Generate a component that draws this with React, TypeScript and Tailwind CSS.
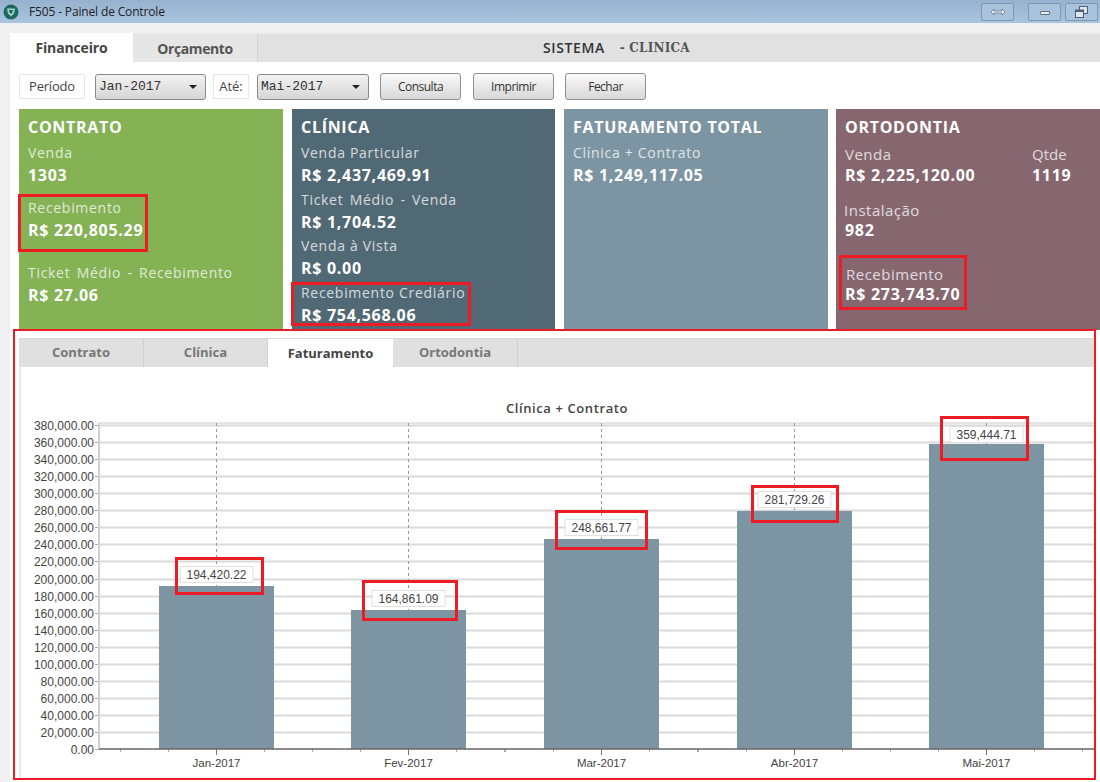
import React from "react";

function Metric({ label, value, className = "", ticket = false }: { label: string; value: string; className?: string; ticket?: boolean }) {
  return (
    <div className={className}>
      <div className={`text-[14px] leading-[20px] tracking-[0.7px] opacity-75 ${ticket ? "[word-spacing:2px]" : ""}`}>{label}</div>
      <div className="mt-px text-[16px] leading-[22px] tracking-[0.7px] font-bold">{value}</div>
    </div>
  );
}

function Btn({ children, w }: { children: React.ReactNode; w: string }) {
  return (
    <div className={`${w} h-[27px] flex items-center justify-center rounded-[3px] border border-[#8f8f8f] bg-gradient-to-b from-[#fafafa] to-[#d8d8d8] text-[12px] tracking-[-0.5px] text-[#333]`}>
      {children}
    </div>
  );
}

function Select({ value, w }: { value: string; w: string }) {
  return (
    <div className={`${w} h-[26px] flex items-center justify-between pl-[3px] pr-[8px] rounded-[3px] border border-[#8a8a8a] bg-gradient-to-b from-[#f2f2f2] to-[#d6d6d6] font-['Liberation_Mono',monospace] text-[13px] text-[#333]`}>
      <span>{value}</span>
      <span className="w-0 h-0 border-x-[4px] border-x-transparent border-t-[4px] border-t-[#222]" />
    </div>
  );
}

const Red = ({ c }: { c: string }) => <div className={`absolute border-[3px] border-[#ed1c24] ${c}`} />;

const Title = ({ children }: { children: React.ReactNode }) => (
  <div className="text-[16px] leading-[22px] tracking-[0.7px] font-bold">{children}</div>
);

const X0 = 99, X1 = 1095, Y0 = 749, STEP = 17.05;
const ticks = Array.from({ length: 20 }, (_, i) => i * 20000);
const fmt = (n: number) => n.toLocaleString("en-US", { minimumFractionDigits: 2, maximumFractionDigits: 2 });
const bars = [
  { x: 159, top: 586, label: "Jan-2017", val: "194,420.22", ly: 566 },
  { x: 351, top: 610, label: "Fev-2017", val: "164,861.09", ly: 590 },
  { x: 544, top: 539, label: "Mar-2017", val: "248,661.77", ly: 519 },
  { x: 737, top: 511, label: "Abr-2017", val: "281,729.26", ly: 491 },
  { x: 929, top: 444, label: "Mai-2017", val: "359,444.71", ly: 426 },
];

function Chart() {
  return (
    <svg width="1076" height="411" viewBox="19 367 1076 411" className="block bg-white font-['Liberation_Sans',sans-serif]">
      <line x1="20" x2="20" y1="367" y2="778" stroke="#e2e2e2" strokeWidth="1.5" />
      <text x="567" y="413" textAnchor="middle" fontSize="13" letterSpacing="0.6" fontWeight="600" fill="#444" fontFamily="'Open Sans',sans-serif">Clínica + Contrato</text>
      <line x1={X0} x2={X1} y1={423} y2={423} stroke="#dcdcdc" strokeWidth="1.5" />
      {ticks.map((t, i) => {
        const y = Math.round(Y0 - i * STEP) + 0.5;
        return (
          <g key={t}>
            {i > 0 && <line x1={X0} x2={X1} y1={y} y2={y} stroke="#dadada" strokeWidth="2" />}
            <line x1={95} x2={X0} y1={y} y2={y} stroke="#aaa" />
            <text x="94" y={y + 4} textAnchor="end" fontSize="12" fill="#444">{fmt(t)}</text>
          </g>
        );
      })}
      <line x1={X0} x2={X0} y1={423} y2={749} stroke="#d0d0d0" strokeWidth="2" />
      {bars.map((b) => {
        const cx = b.x + 57.5;
        return (
          <g key={b.label}>
            <line x1={cx} x2={cx} y1={423} y2={b.top} stroke="#999" strokeDasharray="3 3" />
            <rect x={b.x} y={b.top} width="115" height={749 - b.top} fill="#7d95a2" />
            <rect x={cx - 36.5} y={b.ly + 0.5} width="73" height="16" fill="#fff" stroke="#e0e0e0" />
            <text x={cx} y={b.ly + 12.5} textAnchor="middle" fontSize="12" fill="#444">{b.val}</text>
            <line x1={cx} x2={cx} y1={749} y2={755} stroke="#777" />
            {[-96, -48, 48, 96].map((d) => (
              <line key={d} x1={cx + d} x2={cx + d} y1={749} y2={752} stroke="#aaa" />
            ))}
            <text x={cx} y={767} textAnchor="middle" fontSize="11.5" fill="#444">{b.label}</text>
          </g>
        );
      })}
      <line x1={X0} x2={X1} y1={749} y2={749} stroke="#666" strokeWidth="1.5" />
    </svg>
  );
}

export default function App() {
  return (
    <div className="relative w-[1100px] h-[782px] overflow-hidden bg-[#f0f0f0] font-['Open_Sans',sans-serif] text-[#333]">
      {/* title bar */}
      <div className="h-[23px] flex items-center bg-gradient-to-b from-[#97b2d0] to-[#a9c4de]">
        <svg width="18" height="18" viewBox="0 0 18 18" className="ml-[2px]">
          <circle cx="9" cy="9" r="7.5" fill="#1c6a5f" />
          <path d="M5 5.5h8l-1 5-3 3-3-3z" fill="#a9d0c4" />
          <path d="M7 7h4l-.6 2.6L9 11 7.6 9.6z" fill="#1c6a5f" />
        </svg>
        <span className="ml-[9px] text-[12px] tracking-[-0.15px] text-[#222]">F505 - Painel de Controle</span>
        <div className="ml-auto flex items-center mr-[2px]">
          <div className="w-[33px] h-[18px] flex items-center justify-center rounded-[2px] border border-[#7d98b5] bg-[#aac3dc] mr-[14px]">
            <svg width="16" height="8" viewBox="0 0 16 8"><path d="M1 4l3-3v2h8V1l3 3-3 3V5H4v2z" fill="#e8f0f6" stroke="#5d7084" strokeWidth="0.7" /></svg>
          </div>
          <div className="w-[33px] h-[18px] flex items-center justify-center rounded-[2px] border border-[#7d98b5] bg-[#aac3dc] mr-[4px]">
            <div className="w-[10px] h-[4px] mt-[3px] bg-[#e8eef4] border border-[#5d7084] rounded-[1px]" />
          </div>
          <div className="w-[33px] h-[18px] flex items-center justify-center rounded-[2px] border border-[#7d98b5] bg-[#aac3dc]">
            <svg width="13" height="12" viewBox="0 0 13 12"><rect x="4.5" y="0.5" width="8" height="7" fill="#dfe8f0" stroke="#4d5f70" /><rect x="0.5" y="4" width="8" height="7.5" fill="#dfe8f0" stroke="#4d5f70" /><rect x="0.5" y="4" width="8" height="2" fill="#4d5f70" /></svg>
          </div>
        </div>
      </div>

      {/* outer page */}
      <div className="ml-[10px] mt-[10px] h-[749px] bg-white">
        {/* top tabs */}
        <div className="h-[29px] flex bg-[#e1e1e1] border-t border-[#ececec]">
          <div className="w-[123px] h-[29px] -mt-px bg-white flex items-center justify-center text-[14px] tracking-[-0.15px] font-bold text-[#444]">Financeiro</div>
          <div className="w-[125px] flex items-center justify-center text-[14px] tracking-[-0.4px] font-bold text-[#555] bg-[#e6e6e6] border-r border-[#d4d4d4]">Orçamento</div>
          <div className="ml-[285px] flex items-center h-[27px]">
            <span className="text-[14px] font-semibold tracking-[0.6px] text-[#333]">SISTEMA</span>
            <span className="ml-[15px] text-[12px] font-bold font-['DejaVu_Serif',serif] tracking-[0.2px] text-[#555]">- CLINICA</span>
          </div>
        </div>

        {/* toolbar */}
        <div className="h-[47px] pl-[9px] pt-[11px]">
          <div className="h-[27px] flex items-center">
            <div className="w-[66px] h-[25px] flex items-center justify-center border border-[#e6e6e6] text-[13px] tracking-[-0.2px] text-[#444]">Período</div>
            <Select value="Jan-2017" w="w-[111px] ml-[10px]" />
            <div className="ml-[7px] w-[36px] h-[25px] flex items-center justify-center border border-[#e6e6e6] text-[13px] text-[#444]">Até:</div>
            <Select value="Mai-2017" w="w-[112px] ml-[8px]" />
            <Btn w="w-[81px] ml-[11px]">Consulta</Btn>
            <Btn w="w-[81px] ml-[12px]">Imprimir</Btn>
            <Btn w="w-[81px] ml-[11px]">Fechar</Btn>
          </div>
        </div>

        {/* cards */}
        <div className="flex h-[221px] pl-[9px] text-white">
          <div className="relative w-[264px] bg-[#84b255] pl-[9px] pt-[7px]">
            <Title>CONTRATO</Title>
            <Metric label="Venda" value="1303" className="mt-[5px]" />
            <Metric label="Recebimento" value="R$ 220,805.29" className="mt-[12px]" />
            <Metric label="Ticket Médio - Recebimento" ticket value="R$ 27.06" className="mt-[22px]" />
            <Red c="left-[-1px] top-[85px] w-[130px] h-[58px]" />
          </div>
          <div className="relative w-[263px] ml-[9px] bg-[#516975] pl-[9px] pt-[7px]">
            <Title>CLÍNICA</Title>
            <Metric label="Venda Particular" value="R$ 2,437,469.91" className="mt-[5px]" />
            <Metric label="Ticket Médio - Venda" ticket value="R$ 1,704.52" className="mt-[3.5px]" />
            <Metric label="Venda à Vista" value="R$ 0.00" className="mt-[3.5px]" />
            <Metric label="Recebimento Crediário" value="R$ 754,568.06" className="mt-[3.5px]" />
            <Red c="left-[-1px] top-[173px] w-[180px] h-[44px]" />
          </div>
          <div className="w-[264px] ml-[9px] bg-[#7d95a2] pl-[9px] pt-[7px]">
            <Title>FATURAMENTO TOTAL</Title>
            <Metric label="Clínica + Contrato" value="R$ 1,249,117.05" className="mt-[5px]" />
          </div>
          <div className="relative w-[264px] ml-[8px] bg-[#866770] pl-[9px] pt-[7px]">
            <Title>ORTODONTIA</Title>
            <div className="flex mt-[6px]">
              <div className="w-[187px]">
                <div className="text-[15px] leading-[20px] tracking-[0.5px] opacity-75">Venda</div>
                <div className="mt-px text-[16px] leading-[21px] tracking-[0.7px] font-bold">R$ 2,225,120.00</div>
              </div>
              <div>
                <div className="text-[15px] leading-[20px] opacity-75">Qtde</div>
                <div className="mt-px text-[16px] leading-[21px] tracking-[0.7px] font-bold">1119</div>
              </div>
            </div>
            <div className="mt-[14px] -ml-px text-[15px] leading-[20px] tracking-[0.5px] opacity-75">Instalação</div>
            <div className="text-[16px] leading-[21px] tracking-[0.7px] font-bold">982</div>
            <div className="mt-[23px] ml-px text-[15px] leading-[20px] tracking-[0.5px] opacity-75">Recebimento</div>
            <div className="text-[16px] leading-[21px] tracking-[0.7px] font-bold">R$ 273,743.70</div>
            <Red c="left-[3px] top-[146px] w-[128px] h-[55px]" />
          </div>
        </div>

        {/* chart panel */}
        <div className="pl-[9px] pt-[8px] pr-[5px]">
          <div className="flex h-[29px] bg-[#e0e0e0] border-t border-[#d6d6d6] text-[13px] font-bold">
            <div className="w-[125px] flex items-center justify-center text-[#777] border-r border-[#cfcfcf]">Contrato</div>
            <div className="w-[124px] flex items-center justify-center text-[#777] border-r border-[#cfcfcf]">Clínica</div>
            <div className="w-[125px] h-[29px] bg-white flex items-center justify-center text-[#444]">Faturamento</div>
            <div className="w-[125px] flex items-center justify-center text-[#777] border-r border-[#cfcfcf]">Ortodontia</div>
          </div>
          <Chart />
        </div>
      </div>

      {/* annotation frames over the chart */}
      <div className="absolute left-[13px] top-[329px] w-[1083px] h-[451px] border-[2px] border-[#ed1c24]" />
      <Red c="left-[175px] top-[557px] w-[89px] h-[38px]" />
      <Red c="left-[362px] top-[580px] w-[96px] h-[41px]" />
      <Red c="left-[555px] top-[510px] w-[93px] h-[40px]" />
      <Red c="left-[751px] top-[485px] w-[88px] h-[38px]" />
      <Red c="left-[940px] top-[416px] w-[89px] h-[45px]" />
    </div>
  );
}
